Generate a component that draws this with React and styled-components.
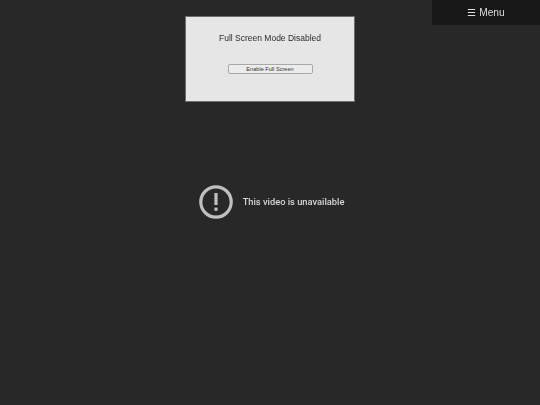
import React from "react";
import styled, { createGlobalStyle } from "styled-components";

const Global = createGlobalStyle`
  html, body {
    margin: 0;
    padding: 0;
    background: #282828;
  }
`;

const Player = styled.div`
  position: relative;
  width: 540px;
  height: 405px;
  overflow: hidden;
  background: #282828;
  display: flex;
  align-items: center;
  justify-content: center;
`;

const Message = styled.div`
  display: flex;
  align-items: center;
  gap: 10px;
  margin: -2px 0 0 3px;
`;

const MessageText = styled.span`
  font-family: Roboto, "Liberation Sans", sans-serif;
  font-size: 9.3px;
  font-weight: 500;
  color: #d6d6d6;
  will-change: opacity;
`;

const MenuButton = styled.div`
  position: absolute;
  top: 0;
  right: 0;
  width: 108px;
  height: 25px;
  box-sizing: border-box;
  padding-bottom: 1px;
  background: #171717;
  color: #dedede;
  font-family: "Liberation Sans", sans-serif;
  font-size: 10.2px;
  display: flex;
  align-items: center;
  justify-content: center;
`;

const MenuLabel = styled.span`
  will-change: opacity;
`;

const Dialog = styled.div`
  position: absolute;
  top: 16px;
  left: 185px;
  width: 170px;
  height: 86px;
  box-sizing: border-box;
  background: #e6e6e6;
  border: 1px solid #6e6e6e;
  display: flex;
  flex-direction: column;
  align-items: center;
  padding-top: 16px;
`;

const Title = styled.div`
  font-family: "Liberation Sans", sans-serif;
  font-size: 8.5px;
  line-height: 11px;
  color: #2a2a2a;
  will-change: opacity;
`;

const EnableButton = styled.button`
  margin-top: 20px;
  width: 85px;
  height: 10px;
  box-sizing: border-box;
  padding: 0;
  background: #ececec;
  border: 1px solid #a8a8a8;
  border-radius: 2px;
  font-family: "Liberation Sans", sans-serif;
  font-size: 5.6px;
  line-height: 8px;
  color: #333;
  will-change: opacity;
`;

const AlertIcon = () => (
  <svg width="34" height="34" viewBox="0 0 34 34" fill="none">
    <circle cx="17" cy="17" r="15.2" stroke="#c0c0c0" strokeWidth="3.2" />
    <rect x="15.4" y="8" width="3.2" height="12" fill="#c0c0c0" />
    <rect x="15.4" y="22.6" width="3.2" height="3.2" fill="#c0c0c0" />
  </svg>
);

export default function App() {
  return (
    <Player>
      <Global />
      <Message>
        <AlertIcon />
        <MessageText>This video is unavailable</MessageText>
      </Message>
      <Dialog>
        <Title>Full Screen Mode Disabled</Title>
        <EnableButton>Enable Full Screen</EnableButton>
      </Dialog>
      <MenuButton>
        <MenuLabel>☰ Menu</MenuLabel>
      </MenuButton>
    </Player>
  );
}
